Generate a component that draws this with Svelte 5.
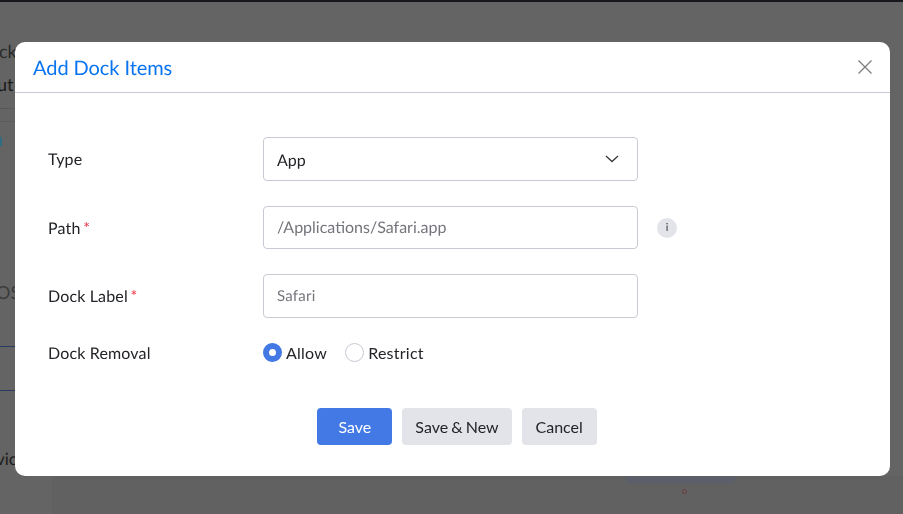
<script>
	let removal = $state('allow');
</script>

<div class="page">
	<div class="topbar"></div>
	<div class="backdrop">
		<span class="bg-text ck">ck</span>
		<span class="bg-text ut">ut</span>
		<span class="bg-text os">OS</span>
		<span class="bg-text vic">vic</span>
		<i class="bg-line l1"></i>
		<i class="bg-line l2"></i>
		<i class="bg-line l3"></i>
		<i class="bg-line l4"></i>
		<i class="bg-side"></i>
		<i class="bg-chip"></i>
		<i class="bg-dot"></i>
		<i class="bg-teal"></i>
	</div>

	<div class="modal">
		<header class="head">
			<h2>Add Dock Items</h2>
			<button class="close" aria-label="Close">
				<svg width="14" height="14" viewBox="0 0 14 14"><path d="M.5.5l13 13M13.5.5l-13 13" stroke="#7d7d7d" stroke-width="1.3" fill="none"/></svg>
			</button>
		</header>

		<form class="body">
			<div class="row r-type">
				<span class="label">Type</span>
				<div class="field select">
					<span class="val">App</span>
					<svg width="14" height="8" viewBox="0 0 14 8"><path d="M1 1l6 5.6L13 1" stroke="#3a3a3a" stroke-width="1.3" fill="none"/></svg>
				</div>
			</div>
			<div class="row r-path">
				<span class="label">Path <em>*</em></span>
				<div class="field ph">/Applications/Safari.app</div>
				<span class="info">i</span>
			</div>
			<div class="row r-dock">
				<span class="label">Dock Label <em>*</em></span>
				<div class="field ph small">Safari</div>
			</div>
			<div class="row r-radio">
				<span class="label">Dock Removal</span>
				<div class="radios">
					<button type="button" class="radio" onclick={() => (removal = 'allow')}>
						<span class="dot" class:on={removal === 'allow'}></span>Allow
					</button>
					<button type="button" class="radio" onclick={() => (removal = 'restrict')}>
						<span class="dot" class:on={removal === 'restrict'}></span>Restrict
					</button>
				</div>
			</div>
			<div class="actions">
				<button type="button" class="btn primary">Save</button>
				<button type="button" class="btn">Save &amp; New</button>
				<button type="button" class="btn">Cancel</button>
			</div>
		</form>
	</div>
</div>

<style>
	:global(body) {
		margin: 0;
		font-family: Lato, "Liberation Sans", sans-serif;
		text-rendering: geometricPrecision;
	}

	.page {
		width: 903px;
		height: 514px;
		position: relative;
		overflow: hidden;
		background: #646464;
		display: flex;
		flex-direction: column;
	}

	.topbar {
		height: 2px;
		background: #17171c;
	}

	.backdrop {
		position: absolute;
		inset: 2px 0 0 0;
	}

	.bg-text {
		position: absolute;
		color: #2a2a2a;
		font-size: 18px;
		line-height: 20px;
	}
	.ck { left: -1px; top: 39px; }
	.ut { left: -3px; top: 72px; color: #1c1c1c; }
	.os { left: -4px; top: 280px; color: #3c3c3c; }
	.vic { left: -4px; top: 447px; color: #1c1c1c; font-size: 17px; }

	.bg-line { position: absolute; left: 0; width: 15px; height: 1px; background: #585858; }
	.l1 { top: 106px; }
	.l2 { top: 119px; background: #5c5c5c; }
	.l3 { top: 344px; background: #2b3a63; }
	.l4 { top: 388px; background: #2b3a63; }

	.bg-side {
		position: absolute;
		left: 52px;
		top: 474px;
		right: 0;
		bottom: 0;
		background: #616161;
	}
	.bg-chip {
		position: absolute;
		left: 625px;
		top: 474px;
		width: 112px;
		height: 8px;
		background: #5c5f69;
		border-radius: 0 0 8px 8px;
	}
	.bg-dot {
		position: absolute;
		left: 682px;
		top: 487px;
		width: 3px;
		height: 3px;
		border: 1px solid #6e3c40;
		border-radius: 50%;
	}
	.bg-teal {
		position: absolute;
		left: 0;
		top: 135px;
		width: 2px;
		height: 9px;
		background: #2f6d80;
	}

	.modal {
		position: absolute;
		left: 15px;
		top: 42px;
		width: 875px;
		height: 434px;
		background: #fff;
		border-radius: 10px;
		color: #222428;
		box-sizing: border-box;
		will-change: transform;
	}

	.head {
		height: 51px;
		box-sizing: border-box;
		border-bottom: 1px solid #c9c9d4;
		display: flex;
		align-items: center;
		justify-content: space-between;
		padding: 0 18px 0 18px;
	}

	h2 {
		margin: 0;
		font-size: 20px;
		font-weight: 400;
		color: #0a74f0;
		letter-spacing: -0.07px;
		padding-top: 1px;
	}

	.close {
		border: 0;
		background: none;
		padding: 0;
		display: flex;
	}

	.body {
		padding: 44px 33px 0;
		font-size: 16px;
	}

	.row {
		display: flex;
		align-items: center;
	}
	.r-type { height: 44px; }
	.r-path { height: 43px; margin-top: 25px; }
	.r-dock { height: 44px; margin-top: 25px; }
	.r-radio { height: 28px; margin-top: 21px; }

	.label {
		width: 215px;
		flex: none;
		line-height: 20px;
		letter-spacing: 0.15px;
		padding-top: 2px;
	}
	.r-path .label { padding-top: 3px; }

	em {
		color: #ee3340;
		font-style: normal;
		margin-left: -1.5px;
	}

	.field {
		width: 375px;
		height: 100%;
		box-sizing: border-box;
		border: 1px solid #c9c9d4;
		border-radius: 4px;
		display: flex;
		align-items: center;
		padding: 0 13px;
	}

	.select {
		justify-content: space-between;
		padding-right: 18px;
	}
	.val { padding-top: 2px; }

	.ph { color: #74757c; }
	.small { font-size: 15px; letter-spacing: 0.25px; }

	.info {
		margin-left: 19px;
		width: 20px;
		height: 20px;
		border-radius: 50%;
		background: #e3e4ea;
		color: #333;
		font-size: 11px;
		display: flex;
		align-items: center;
		justify-content: center;
	}

	.radios {
		display: flex;
		gap: 18px;
		margin-top: -1px;
	}

	.radio {
		border: 0;
		background: none;
		padding: 0;
		font: inherit;
		color: inherit;
		display: flex;
		align-items: center;
		gap: 4px;
		letter-spacing: 0.25px;
	}

	.dot {
		width: 19px;
		height: 19px;
		box-sizing: border-box;
		border: 1px solid #c9c9d4;
		border-radius: 50%;
		background: #fff;
	}
	.dot.on {
		border: 6px solid #4279e4;
	}

	.actions {
		display: flex;
		justify-content: center;
		gap: 10px;
		margin-top: 41px;
		padding-left: 9px;
	}

	.btn {
		height: 37px;
		border: 0;
		border-radius: 4px;
		background: #e3e4ea;
		color: #222428;
		font: inherit;
		padding: 0 13px;
		min-width: 75px;
		word-spacing: -1px;
	}
	.primary {
		background: #4279e4;
		color: #fff;
	}
</style>
